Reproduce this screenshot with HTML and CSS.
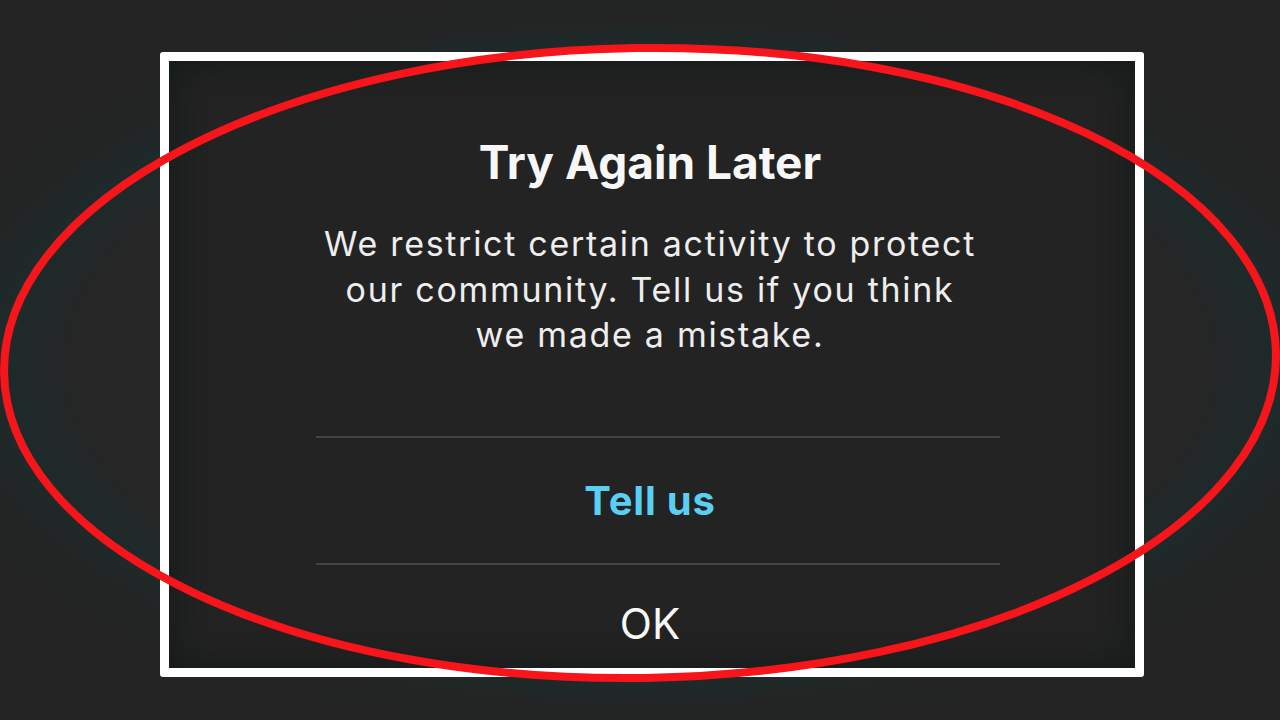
FILE: index.html
```html
<!DOCTYPE html>
<html lang="en">
<head>
    <meta charset="UTF-8">
    <meta name="viewport" content="width=device-width, initial-scale=1.0">
    <title>Try Again Later</title>
    <link rel="stylesheet" href="styles.css">
</head>
<body>
    <div class="stage">
        <div class="frame">
            <div class="alert">
                <h1 class="alert-title">Try Again Later</h1>
                <p class="alert-message">We restrict certain activity to protect<br>our community. Tell us if you think<br>we made a mistake.</p>
                <div class="alert-actions">
                    <button class="alert-btn alert-btn-link">Tell us</button>
                    <button class="alert-btn alert-btn-ok">OK</button>
                </div>
            </div>
        </div>

        <!-- red marker circle drawn over the screenshot -->
        <svg class="marker" width="1280" height="720" viewBox="0 0 1280 720">
            <ellipse cx="640" cy="363" rx="636" ry="315" fill="none" stroke="#f5151a" stroke-width="8" transform="rotate(-0.9 640 363)"/>
        </svg>
    </div>
</body>
</html>
```

FILE: styles.css
```css
body {
    margin: 0;
    padding: 0;
    background-color: #252525;
    font-family: Inter, "Open Sans", "Liberation Sans", sans-serif;
    color: #f2f2f2;
}

.stage {
    position: relative;
    width: 1280px;
    height: 720px;
    overflow: hidden;
    box-sizing: border-box;
    padding: 52px 0 0 160px;
    background: radial-gradient(ellipse 640px 318px at 640px 363px, #262626 88%, #1e2a2a 99%, #232525 108%, #242424 120%);
}

.frame {
    width: 984px;
    height: 625px;
    box-sizing: border-box;
    border: 9px solid #ffffff;
    border-radius: 3px;
    background-color: #232323;
    box-shadow: inset 0 0 40px rgba(16, 22, 22, 0.8);
    padding: 0 0 0 147px;
}

.alert {
    width: 684px;
    display: flex;
    flex-direction: column;
}

.alert-title {
    margin: 74px 0 0;
    padding-right: 16px;
    font-size: 46px;
    line-height: 54px;
    font-weight: 700;
    text-align: center;
    color: #f7f7f7;
}

.alert-message {
    margin: 32px 0 0;
    padding-right: 16px;
    font-size: 34px;
    line-height: 45.5px;
    letter-spacing: 1.7px;
    text-align: center;
    color: #eeeeee;
}

.alert-actions {
    margin-top: 78px;
    display: flex;
    flex-direction: column;
    border-top: 2px solid #444444;
}

.alert-btn {
    background: none;
    border: none;
    padding: 0 16px 0 0;
    font-family: inherit;
    cursor: pointer;
}

.alert-btn-link {
    height: 127px;
    border-bottom: 2px solid #444444;
    font-size: 40px;
    font-weight: 700;
    letter-spacing: 0.8px;
    color: #58cff3;
}

.alert-btn-ok {
    height: 96px;
    padding-top: 22px;
    font-size: 42px;
    font-weight: 400;
    color: #f7f7f7;
}

.marker {
    position: absolute;
    left: 0;
    top: 0;
}
```
